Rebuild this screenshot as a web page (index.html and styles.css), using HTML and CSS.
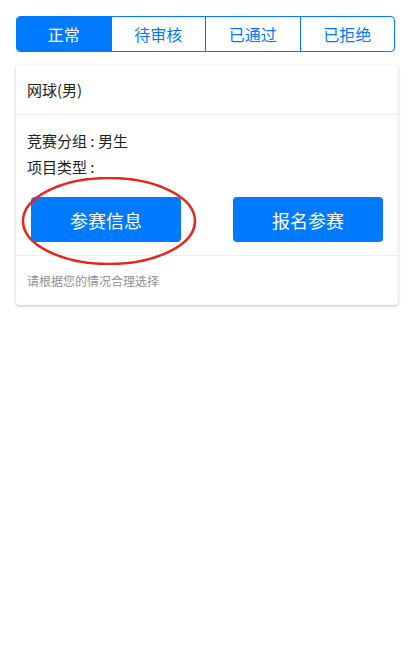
FILE: index.html
```html
<!DOCTYPE html>
<html lang="zh-CN">
  <head>
    <meta charset="UTF-8">
    <meta name="viewport" content="width=device-width, initial-scale=1.0">
    <title>报名</title>
    <link rel="stylesheet" href="styles.css">
  </head>
  <body>
    <nav class="segmented">
      <a class="seg active">正常</a>
      <a class="seg">待审核</a>
      <a class="seg">已通过</a>
      <a class="seg">已拒绝</a>
    </nav>

    <article class="card">
      <div class="card-header">网球(男)</div>
      <div class="card-content">
        <p>竞赛分组 : 男生</p>
        <p>项目类型 :</p>
        <div class="actions">
          <span class="mark">
            <button class="btn">参赛信息</button>
            <svg class="ring" viewBox="0 0 176 88" aria-hidden="true">
              <ellipse cx="88" cy="44" rx="86" ry="43" />
            </svg>
          </span>
          <button class="btn">报名参赛</button>
        </div>
      </div>
      <div class="card-footer">请根据您的情况合理选择</div>
    </article>
  </body>
</html>
```

FILE: styles.css
```css
*,
*::after,
*::before {
  box-sizing: border-box;
}

body {
  margin: 0;
  padding: 16px 14px 16px 16px;
  font-family: "Noto Sans CJK SC", "Noto Sans", sans-serif;
  color: #333;
  background: #fff;
}

p {
  margin: 0;
}

.segmented {
  display: flex;
  width: 379px;
  height: 36px;
  border: 1px solid #007aff;
  border-radius: 4px;
  overflow: hidden;
}

.seg {
  flex: 1;
  display: flex;
  align-items: center;
  justify-content: center;
  font-size: 16px;
  color: #007aff;
  border-left: 1px solid #007aff;
}

.seg:first-child {
  border-left: 0;
}

.seg.active {
  background: #007aff;
  color: #fff;
}

.card {
  margin-top: 13px;
  width: 382px;
  background: #fff;
  border-radius: 3px;
  box-shadow: 0 1px 3px rgba(0, 0, 0, 0.25);
}

.card-header {
  display: flex;
  align-items: center;
  height: 50px;
  padding: 0 11px;
  font-size: 15px;
  color: #222;
  border-bottom: 1px solid #eee;
}

.card-content {
  padding: 13px 11px 13px;
  font-size: 15px;
  color: #222;
  line-height: 26px;
}

.actions {
  display: flex;
  justify-content: space-between;
  padding: 17px 4px 0;
}

.btn {
  width: 150px;
  height: 45px;
  border: 0;
  border-radius: 4px;
  background: #007aff;
  color: #fff;
  font: inherit;
  font-size: 18px;
}

.mark {
  position: relative;
  display: block;
}

.ring {
  position: absolute;
  left: -10px;
  top: -20px;
  width: 176px;
  height: 88px;
  pointer-events: none;
}

.ring ellipse {
  fill: none;
  stroke: #e8251c;
  stroke-width: 2.5;
}

.card-footer {
  display: flex;
  align-items: center;
  height: 50px;
  padding: 0 11px;
  font-size: 12px;
  color: #8f8f94;
  border-top: 1px solid #eee;
}
```
